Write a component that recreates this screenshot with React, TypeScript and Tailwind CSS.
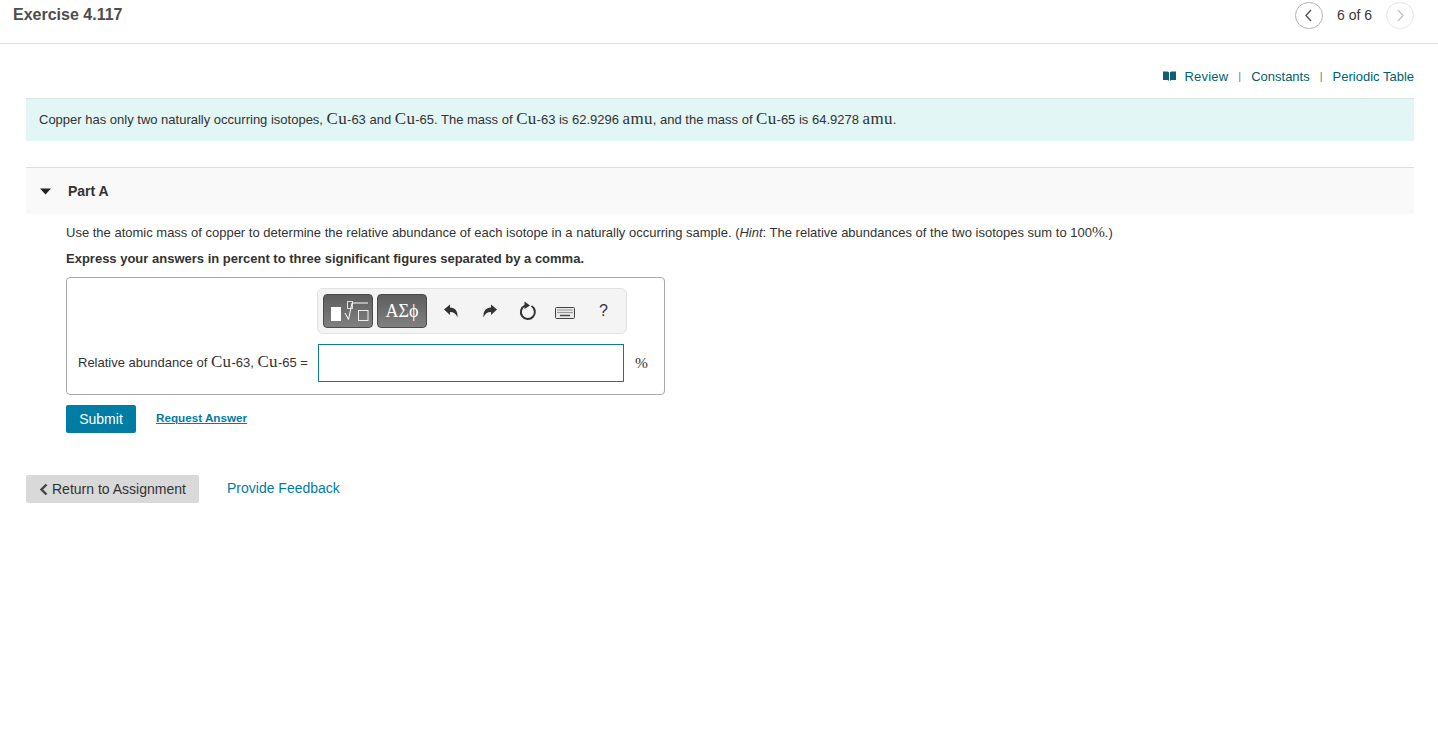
import React from "react";

function Mj({ children }: { children: React.ReactNode }) {
	return <span className="font-['Liberation_Serif',serif] text-[17px] tracking-[0.3px] leading-none">{children}</span>;
}

function Pct() {
	return <span className="font-['Liberation_Serif',serif] text-[15.5px] leading-none">%</span>;
}

function App() {
	return (
		<div className="min-h-[747px] bg-white font-['Liberation_Sans',sans-serif] text-[13px] text-[#333]">
			{/* top bar */}
			<header className="h-[44px] border-b border-b-[#dedede] flex items-start justify-between pl-[13px] pr-[24px]">
				<h1 className="text-[16px] leading-[18px] mt-[6px] font-bold text-[#4d4d4d]">Exercise 4.117</h1>
				<div className="flex items-center mt-[2px]">
					<button className="w-[28px] h-[27px] rounded-full border border-[#b5b5b5] flex items-center justify-center">
						<svg width="9" height="13" viewBox="0 0 9 13" fill="none" stroke="#555" strokeWidth="1.4">
							<path d="M7 1 L2 6.5 L7 12" />
						</svg>
					</button>
					<span className="ml-[14px] mr-[14px] text-[14px] text-[#3a3a3a]">6 of 6</span>
					<button className="w-[28px] h-[27px] rounded-full border border-[#e4e4e4] flex items-center justify-center">
						<svg width="9" height="13" viewBox="0 0 9 13" fill="none" stroke="#c4c4c4" strokeWidth="1.4">
							<path d="M2 1 L7 6.5 L2 12" />
						</svg>
					</button>
				</div>
			</header>

			<main className="mx-[26px] w-[1388px]">
				{/* resource links */}
				<nav className="h-[54px] pt-[24px] flex items-start justify-end text-[13px] leading-[17px] text-[#00616f]">
					<svg width="13" height="10" viewBox="0 0 13 10" className="mt-[3px] mr-[8px]" fill="#0f5f75">
						<path d="M0 0.5 H4 Q5.6 0.5 6 1.5 V10 Q5.4 9 4 9 H0 Z" />
						<path d="M13 0.5 H9 Q7.4 0.5 7 1.5 V10 Q7.6 9 9 9 H13 Z" />
					</svg>
					<a className="tracking-[0.2px]">Review</a>
					<span className="mx-[10px] text-[#777] text-[11px]">|</span>
					<a>Constants</a>
					<span className="mx-[10px] text-[#777] text-[11px]">|</span>
					<a>Periodic Table</a>
				</nav>

				{/* intro */}
				<section className="h-[43px] bg-[#e2f6f5] border-t border-t-[#d5e3e2] pl-[13px] flex items-center text-[13px] text-[#333]">
					<p>
						Copper has only two naturally occurring isotopes, <Mj>Cu</Mj>-63 and <Mj>Cu</Mj>-65. The mass of <Mj>Cu</Mj>-63 is 62.9296 <Mj>amu</Mj>, and the mass of <Mj>Cu</Mj>-65 is 64.9278 <Mj>amu</Mj>.
					</p>
				</section>

				{/* part header */}
				<section className="mt-[26px] h-[47px] bg-[#f9f9f9] border-t border-t-[#dedede] flex items-center">
					<svg width="11" height="7" viewBox="0 0 11 7" className="ml-[14px]" fill="#222">
						<path d="M0 0.5 H11 L5.5 6.5 Z" />
					</svg>
					<span className="ml-[17px] text-[14px] font-bold text-[#333]">Part A</span>
				</section>

				{/* part body */}
				<div className="pl-[40px]">
					<p className="mt-[10px] leading-[18px] text-[#333]">
						Use the atomic mass of copper to determine the relative abundance of each isotope in a naturally occurring sample. (<i>Hint</i>: The relative abundances of the two isotopes sum to 100<Pct />.)
					</p>
					<p className="mt-[8px] leading-[18px] font-bold text-[#333]">
						Express your answers in percent to three significant figures separated by a comma.
					</p>

					{/* answer box */}
					<div className="mt-[9px] w-[599px] h-[118px] border border-[#a8a8a8] rounded-[4px] relative pt-[10px]">
						<div className="ml-[250px] w-[310px] h-[46px] bg-[#f4f4f4] border border-[#e2e2e2] rounded-[6px] flex items-center pl-[5px]">
							<button className="w-[50px] h-[34px] rounded-[4px] border border-[#4a4a4a] bg-gradient-to-b from-[#5e5e5e] to-[#808080] relative">
								<svg width="50" height="34" viewBox="0 0 50 34" className="absolute -left-px -top-px" fill="none">
									<rect x="8" y="13" width="10" height="14" fill="#fff" />
									<rect x="24.5" y="7.5" width="5" height="7" stroke="#ddd" />
									<path d="M22 19 L25.5 25.5 L29 9 H45" stroke="#fff" strokeWidth="1" />
									<rect x="35.5" y="16.5" width="9.5" height="10" stroke="#eee" />
								</svg>
							</button>
							<button className="ml-[4px] w-[50px] h-[34px] rounded-[4px] border border-[#4a4a4a] bg-gradient-to-b from-[#5e5e5e] to-[#808080] text-white font-['Liberation_Serif',serif] text-[18px]">
								ΑΣϕ
							</button>
							<svg width="16" height="15" viewBox="0 0 16 15" className="ml-[16px]" fill="#333">
								<path d="M1 5.5 L7 0.5 V3.6 C12 3.6 15 7 14.5 13.5 C13.3 10 11 8 7 8 V11 Z" />
							</svg>
							<svg width="16" height="15" viewBox="0 0 16 15" className="ml-[23px]" fill="#333">
								<path d="M15 5.5 L9 0.5 V3.6 C4 3.6 1 7 1.5 13.5 C2.7 10 5 8 9 8 V11 Z" />
							</svg>
							<svg width="18" height="20" viewBox="0 0 18 20" className="ml-[21px]" fill="none" stroke="#333" strokeWidth="2">
								<path d="M6 4.6 A7 7 0 1 0 12.5 5" />
								<path d="M5.5 0.5 L11 4.5 L5.5 8 Z" fill="#333" stroke="none" />
							</svg>
							<svg width="20" height="12" viewBox="0 0 20 12" className="ml-[18px] mt-[3px]" fill="none">
								<rect x="0.5" y="0.5" width="19" height="11" rx="1" fill="#e8e8e8" stroke="#444" />
								<path d="M2.5 3 H17.5 M2.5 5.5 H17.5" stroke="#444" strokeWidth="1.2" strokeDasharray="1 1" />
								<path d="M5 8.5 H15" stroke="#444" strokeWidth="1.4" />
							</svg>
							<span className="ml-[24px] text-[16px] text-[#333]">?</span>
						</div>
						<div className="flex items-center mt-[10px] pl-[11px]">
							<label className="w-[240px] text-[#333] whitespace-nowrap">
								Relative abundance of <Mj>Cu</Mj>-63, <Mj>Cu</Mj>-65 =
							</label>
							<input className="w-[306px] h-[38px] border border-[#0d7a9c] outline-none bg-white" />
							<span className="ml-[11px] mt-[2px]"><Pct /></span>
						</div>
					</div>

					<div className="mt-[10px] flex items-start">
						<button className="w-[70px] h-[28px] bg-[#007ca5] rounded-[2px] text-white text-[14px]">Submit</button>
						<a className="ml-[20px] mt-[5px] text-[11.7px] leading-[16px] font-bold underline text-[#007ca5]">Request Answer</a>
					</div>
				</div>

				{/* footer */}
				<div className="mt-[42px] flex items-start">
					<button className="w-[173px] h-[28px] bg-[#d9d9d9] rounded-[2px] flex items-center pl-[13px] text-[14px] text-[#333]">
						<svg width="9" height="13" viewBox="0 0 9 13" className="mr-[4px]" fill="none" stroke="#444" strokeWidth="2.4">
							<path d="M7.5 1.5 L2.5 6.5 L7.5 11.5" />
						</svg>
						Return to Assignment
					</button>
					<a className="ml-[28px] mt-[4px] text-[14px] leading-[18px] text-[#007ca5]">Provide Feedback</a>
				</div>
			</main>
		</div>
	);
}

export default App;
